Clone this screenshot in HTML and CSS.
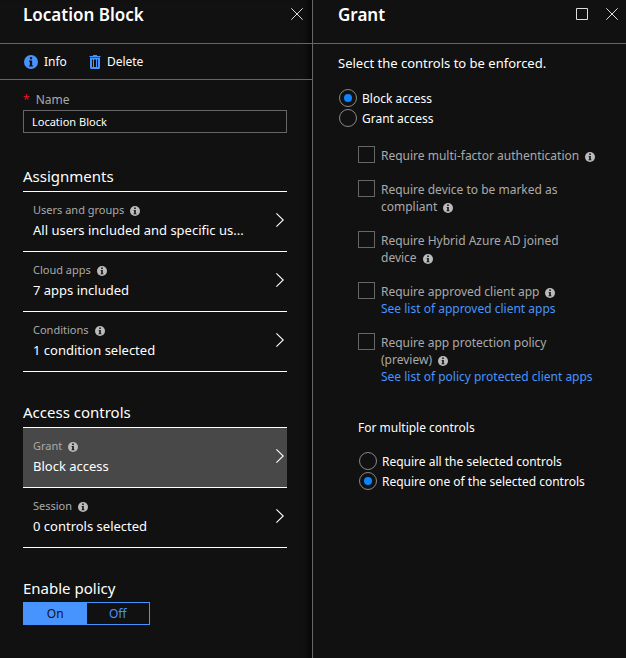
FILE: index.html
```html
<!DOCTYPE html>
<html lang="en">
<head>
<meta charset="utf-8">
<title>Location Block</title>
<link rel="stylesheet" href="styles.css">
</head>
<body>
<svg class="defs" aria-hidden="true">
  <symbol id="info" viewBox="0 0 10 10">
    <circle cx="5" cy="5" r="5" fill="currentColor"/>
    <path class="info-mark" d="M4.2 1.6h1.6v1.5H4.2zM3.6 4h2.2v3.5h.7v.8H3.5v-.8h.7V4.8h-.6z"/>
  </symbol>
  <symbol id="close" viewBox="0 0 12 12">
    <path d="M.3.3l11.4 11.4M11.7.3L.3 11.7" fill="none" stroke="currentColor"/>
  </symbol>
  <symbol id="chevron" viewBox="0 0 8 14">
    <path d="M.4.4L7.2 7 .4 13.6" fill="none" stroke="currentColor" stroke-width="1.1"/>
  </symbol>
</svg>
<main class="blades">
  <section class="blade blade-policy">
    <header class="blade-header">
      <h1>Location Block</h1>
      <button class="icon-button" aria-label="Close"><svg><use href="#close"/></svg></button>
    </header>
    <div class="toolbar">
      <button class="command"><svg class="command-info"><use href="#info"/></svg>Info</button>
      <button class="command">
        <svg class="command-trash" viewBox="0 0 12 14" fill="none" stroke="currentColor">
          <path d="M.5 1.5h11M4 .5h4"/>
          <path d="M2 3.5v9q0 .5.5.5h7q.5 0 .5-.5v-9z" stroke-width="2"/>
          <path d="M4.5 4v8M7.5 4v8"/>
        </svg>Delete</button>
    </div>
    <div class="policy-body">
      <label class="name-label" for="name"><span class="required">*</span>Name</label>
      <input class="name-input" id="name" type="text" value="Location Block">

      <h2>Assignments</h2>
      <div class="rows">
        <button class="row"><span class="row-text"><span class="row-label">Users and groups<svg class="info"><use href="#info"/></svg></span><span class="row-value">All users included and specific us...</span></span><svg class="chevron"><use href="#chevron"/></svg></button>
        <button class="row"><span class="row-text"><span class="row-label">Cloud apps<svg class="info"><use href="#info"/></svg></span><span class="row-value">7 apps included</span></span><svg class="chevron"><use href="#chevron"/></svg></button>
        <button class="row"><span class="row-text"><span class="row-label">Conditions<svg class="info"><use href="#info"/></svg></span><span class="row-value">1 condition selected</span></span><svg class="chevron"><use href="#chevron"/></svg></button>
      </div>

      <h2>Access controls</h2>
      <div class="rows">
        <button class="row row-active"><span class="row-text"><span class="row-label">Grant<svg class="info"><use href="#info"/></svg></span><span class="row-value">Block access</span></span><svg class="chevron"><use href="#chevron"/></svg></button>
        <button class="row"><span class="row-text"><span class="row-label">Session<svg class="info"><use href="#info"/></svg></span><span class="row-value">0 controls selected</span></span><svg class="chevron"><use href="#chevron"/></svg></button>
      </div>

      <h2>Enable policy</h2>
      <div class="toggle" role="group" aria-label="Enable policy">
        <button class="toggle-on" aria-pressed="true">On</button>
        <button aria-pressed="false">Off</button>
      </div>
    </div>
  </section>

  <section class="blade">
    <header class="blade-header grant-header">
      <h1>Grant</h1>
      <button class="icon-button" aria-label="Maximize"><svg viewBox="0 0 12 12"><path d="M.5.5h11v11H.5z" fill="none" stroke="currentColor"/></svg></button>
      <button class="icon-button" aria-label="Close"><svg><use href="#close"/></svg></button>
    </header>
    <div class="grant-body">
      <p class="intro">Select the controls to be enforced.</p>
      <div class="radios">
        <label><input type="radio" name="access" checked>Block access</label>
        <label><input type="radio" name="access">Grant access</label>
      </div>
      <div class="nested">
        <ul class="checks">
          <li><input type="checkbox" id="mfa"><div><label for="mfa">Require multi-factor <span class="keep">authentication<svg class="info"><use href="#info"/></svg></span></label></div></li>
          <li><input type="checkbox" id="compliant"><div><label for="compliant">Require device to be marked as <span class="keep">compliant<svg class="info"><use href="#info"/></svg></span></label></div></li>
          <li><input type="checkbox" id="hybrid"><div><label for="hybrid">Require Hybrid Azure AD joined <span class="keep">device<svg class="info"><use href="#info"/></svg></span></label></div></li>
          <li><input type="checkbox" id="approved"><div><label for="approved">Require approved client <span class="keep">app<svg class="info"><use href="#info"/></svg></span></label><a href="#approved">See list of approved client apps</a></div></li>
          <li><input type="checkbox" id="protection"><div><label for="protection">Require app protection policy <span class="keep">(preview)<svg class="info"><use href="#info"/></svg></span></label><a href="#protection">See list of policy protected client apps</a></div></li>
        </ul>
        <h3>For multiple controls</h3>
        <div class="radios">
          <label><input type="radio" name="multiple">Require all the selected controls</label>
          <label><input type="radio" name="multiple" checked>Require one of the selected controls</label>
        </div>
      </div>
    </div>
  </section>
</main>
</body>
</html>
```
FILE: styles.css
```css
* { box-sizing: border-box; }

body {
  margin: 0;
  background: #111;
  color: #fff;
  font: 12px/17px "Noto Sans", "Open Sans", sans-serif;
}

button, input { font: inherit; color: inherit; }
button { margin: 0; padding: 0; border: 0; background: none; cursor: pointer; }
h1, h2, h3, p, ul { margin: 0; padding: 0; }

.defs { position: absolute; width: 0; height: 0; }
.info-mark { fill: #111; }

.blades {
  display: grid;
  grid-template-columns: 1fr 1fr;
  min-height: 100vh;
}

.blade-policy {
  border-right: 1px solid #666;
  box-shadow: inset -10px 0 8px -8px #000;
}

.blade-header {
  display: flex;
  align-items: flex-start;
  gap: 18px;
  height: 44px;
  padding: 3px 9px 0 23px;
  border-bottom: 1px solid #666;
}

.grant-header { padding-left: 25px; padding-right: 8px; }

h1 { flex: 1; font-size: 17px; line-height: 24px; font-weight: 600; }

.icon-button { height: 22px; color: #ddd; }
.icon-button svg { display: block; width: 12px; height: 12px; }

.toolbar {
  display: flex;
  gap: 22px;
  height: 36px;
  padding-left: 24px;
  border-bottom: 1px solid #666;
}

.command { display: flex; align-items: center; gap: 6px; }
.command svg { color: #4894fe; }
.command-info { width: 14px; height: 14px; }
.command-trash { width: 12px; height: 14px; }

.policy-body { padding: 11px 25px 24px 23px; }

.name-label { display: block; height: 19px; color: #aaa; }
.required { margin-right: 6px; color: #e81123; }

.name-input {
  display: block;
  width: 100%;
  height: 23px;
  padding: 0 8px;
  border: 1px solid #666;
  border-radius: 0;
  background: none;
  font-size: 11px;
}

h2 { margin-top: 31px; font-size: 15px; line-height: 24px; font-weight: 400; }

.rows { margin-top: 3px; border-top: 1px solid #fff; }
.rows + h2 { margin-top: 28px; }

.row {
  display: flex;
  align-items: center;
  width: 100%;
  height: 60px;
  padding: 0 3px 4px 10px;
  border-bottom: 1px solid #fff;
  text-align: left;
}

.row-active { background: #484848; }
.row-text { flex: 1; min-width: 0; }
.row-label, .row-value { display: block; line-height: 20px; }
.row-label { font-size: 11px; color: #aaa; }
.row-value { font-size: 13px; white-space: nowrap; }

.chevron { width: 8px; height: 14px; }

.info { width: 10px; height: 10px; margin-left: 6px; vertical-align: -2px; color: #bbb; }

.toggle { display: flex; width: 127px; height: 23px; margin-top: 2px; border: 1px solid #4894fe; }
.toggle button { flex: 1; color: #4894fe; }
.toggle .toggle-on { background: #4894fe; color: #111; }

.grant-body { padding: 9px 20px 24px 25px; }
.intro { margin-bottom: 15px; font-size: 13px; line-height: 20px; }

.radios label { display: flex; align-items: center; gap: 5px; height: 20px; }

input[type="radio"] {
  appearance: none;
  display: grid;
  place-items: center;
  width: 18px;
  height: 18px;
  margin: 0 0 0 1px;
  border: 1px solid #888;
  border-radius: 50%;
}

input[type="radio"]:checked::before {
  content: "";
  width: 8px;
  height: 8px;
  border-radius: 50%;
  background: #0a84ff;
}

.nested { padding: 18px 0 0 20px; }

.checks { display: grid; gap: 16px; list-style: none; color: #aaa; }
.checks li { display: grid; grid-template-columns: 17px 1fr; gap: 6px; align-items: start; }
.checks div { padding-top: 1px; }
.checks a { display: block; color: #4894fe; text-decoration: none; }
.keep { white-space: nowrap; }

input[type="checkbox"] {
  appearance: none;
  width: 17px;
  height: 17px;
  margin: 0;
  border: 1px solid #666;
  border-radius: 0;
}

input[type="checkbox"]:checked { background: #0a84ff; }

h3 { margin: 34px 0 15px; font-size: 12px; line-height: 17px; font-weight: 400; }
```
